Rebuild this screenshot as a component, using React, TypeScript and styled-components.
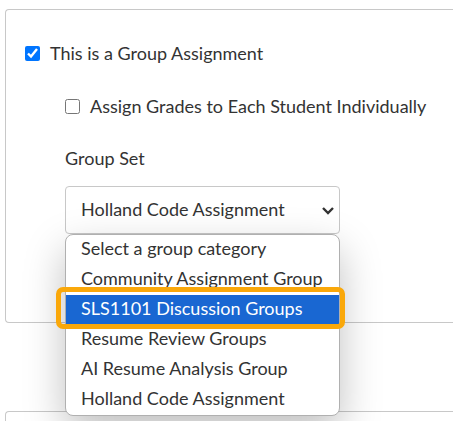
import React, { useState } from 'react'
import styled, { createGlobalStyle } from 'styled-components'

const GlobalStyle = createGlobalStyle`
  * {
    box-sizing: border-box;
  }

  body {
    margin: 0;
    background: #fff;
    color: #333;
    font-family: Lato, sans-serif;
    font-size: 18px;
    line-height: 24px;
    overflow: hidden;
  }
`

const Page = styled.main`
  display: flex;
  flex-direction: column;
  gap: 88px;
  padding: 9px 0 0 5px;
`

const Panel = styled.section`
  padding: 31px 20px 88px 19px;
  border: 1px solid #c8c8c8;
  border-right: 0;
  border-radius: 4px 0 0 4px;
`

const NextPanel = styled.section`
  height: 10px;
  border: 1px solid #c8c8c8;
  border-width: 1px 0 0 1px;
  border-radius: 4px 0 0 0;
`

const Fields = styled.div<{ $nested?: boolean }>`
  display: flex;
  flex-direction: column;
  align-items: flex-start;
  gap: 28px;
  padding-left: ${props => (props.$nested ? '40px' : '0')};
`

const CheckLabel = styled.label`
  display: flex;
  align-items: center;
  gap: 10px;
  white-space: nowrap;
`

const Checkbox = styled.input`
  width: 15px;
  height: 15px;
  margin: 0;
`

const Field = styled.div`
  display: flex;
  flex-direction: column;
  gap: 16px;
  width: 275px;
`

const Group = styled(Fields)`
  gap: 29px;
`

const SelectBox = styled.div`
  position: relative;
`

const Select = styled.select`
  display: block;
  width: 100%;
  height: 48px;
  padding: 0 32px 2px 15px;
  appearance: none;
  background: #fff;
  border: 1px solid #c8c8c8;
  border-radius: 4px;
  color: inherit;
  font: inherit;
`

const Chevron = styled.svg`
  position: absolute;
  top: 20px;
  right: 6px;
  pointer-events: none;
`

const Menu = styled.ul`
  position: absolute;
  top: 100%;
  left: 0;
  right: 0;
  z-index: 1;
  margin: 0;
  padding: 0;
  list-style: none;
  background: #fff;
  border: 1px solid #b0b0b0;
  border-radius: 8px;
  box-shadow: 0 16px 40px rgba(0, 0, 0, 0.25);
`

const Option = styled.li<{ $active: boolean }>`
  position: relative;
  height: 30px;
  padding: 0 15px;
  line-height: 26px;
  white-space: nowrap;
  background: ${props => (props.$active ? '#1967d2' : 'transparent')};
  background-clip: padding-box;
  border-bottom: ${props => (props.$active ? '1px solid transparent' : '0')};
  color: ${props => (props.$active ? '#fff' : 'inherit')};
`

const Marker = styled.span`
  position: absolute;
  z-index: 1;
  inset: -8px -6px -5px -10px;
  border: 5px solid #faa80a;
  border-radius: 7px;
  pointer-events: none;
`

const groups = [
  'Select a group category',
  'Community Assignment Group',
  'SLS1101 Discussion Groups',
  'Resume Review Groups',
  'AI Resume Analysis Group',
  'Holland Code Assignment',
]

const GroupSelect: React.FC = () => {
  const [value, setValue] = useState('Holland Code Assignment')
  const active = 'SLS1101 Discussion Groups'

  return (
    <Field>
      <label htmlFor="group-set">Group Set</label>
      <SelectBox>
        <Select id="group-set" value={value} onChange={e => setValue(e.target.value)}>
          {groups.map(group => <option key={group}>{group}</option>)}
        </Select>
        <Chevron width="12" height="9" viewBox="0 0 12 9" fill="none" aria-hidden="true">
          <path d="M1 2L6 7L11 2" stroke="#333" strokeWidth="2.4" />
        </Chevron>
        <Menu role="listbox" aria-label="Group Set">
          {groups.map(group => (
            <Option
              key={group}
              role="option"
              aria-selected={group === value}
              $active={group === active}
              onClick={() => setValue(group)}
            >
              {group}
              {group === active && <Marker />}
            </Option>
          ))}
        </Menu>
      </SelectBox>
    </Field>
  )
}

const App: React.FC = () => (
  <>
    <GlobalStyle />
    <Page>
      <Panel>
        <Group>
          <CheckLabel>
            <Checkbox type="checkbox" defaultChecked />
            This is a Group Assignment
          </CheckLabel>
          <Fields $nested>
            <CheckLabel>
              <Checkbox type="checkbox" />
              Assign Grades to Each Student Individually
            </CheckLabel>
            <GroupSelect />
          </Fields>
        </Group>
      </Panel>
      <NextPanel />
    </Page>
  </>
)

export default App
